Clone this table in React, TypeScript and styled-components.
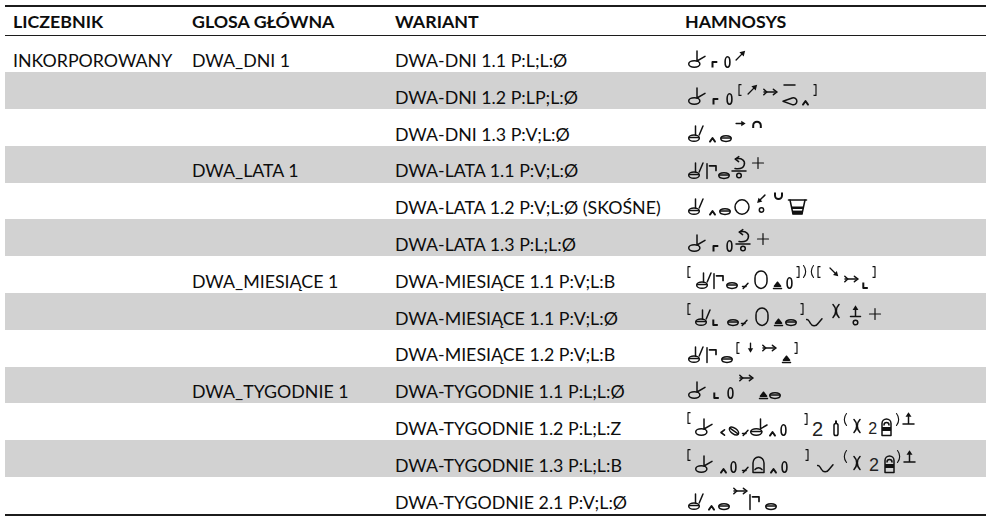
import React from 'react';
import styled, { createGlobalStyle } from 'styled-components';

const GlobalStyle = createGlobalStyle`
  html, body {
    margin: 0;
    padding: 0;
    background: #fff;
  }
  body {
    font-family: Lato, 'Noto Sans', sans-serif;
    color: #0d0d0d;
  }
`;

const Table = styled.div`
  margin: 5px 0 0 5px;
  width: 981px;
  border-top: 2px solid #1c1c1c;
  border-bottom: 2px solid #1c1c1c;
`;

const Row = styled.div<{ $shade?: boolean; $head?: boolean }>`
  display: grid;
  grid-template-columns: 179px 203px 290px 1fr;
  align-items: end;
  box-sizing: border-box;
  height: ${(p) => (p.$head ? '28.5px' : '36.8px')};
  padding-left: 8px;
  background: ${(p) => (p.$shade ? '#d2d2d2' : 'transparent')};
  border-bottom: ${(p) => (p.$head ? '1.5px solid #1c1c1c' : 'none')};
`;

const Cell = styled.div<{ $head?: boolean }>`
  font-size: 17.8px;
  line-height: 1.2;
  font-weight: ${(p) => (p.$head ? 700 : 400)};
  padding-bottom: ${(p) => (p.$head ? '2px' : '1px')};
  white-space: nowrap;
`;

const Notation = styled.div`
  display: flex;
  align-items: flex-end;
  padding-bottom: 4px;
`;

const Sym = styled.svg<{ $lift?: number; $ml?: number }>`
  display: block;
  flex: none;
  overflow: visible;
  margin-left: ${(p) => p.$ml ?? 2}px;
  margin-bottom: ${(p) => p.$lift ?? 0}px;
  fill: none;
  stroke: #111;
  stroke-width: 1.5;
  stroke-linecap: round;
  stroke-linejoin: round;
`;

const Num = styled.span<{ $size: number; $lift?: number; $ml?: number }>`
  display: block;
  flex: none;
  font-family: 'Liberation Sans', Arial, sans-serif;
  font-size: ${(p) => p.$size}px;
  line-height: 1;
  font-weight: 400;
  color: #222;
  margin-left: ${(p) => p.$ml ?? 2}px;
  margin-bottom: ${(p) => (p.$lift ?? 0) - p.$size * 0.155}px;
`;

type GP = { lift?: number; ml?: number };

const make = (w: number, h: number, body: React.ReactNode) => {
  const Glyph = ({ lift, ml }: GP) => (
    <Sym width={w} height={h} viewBox={`0 0 ${w} ${h}`} $lift={lift} $ml={ml}>
      {body}
    </Sym>
  );
  return Glyph;
};

const INK = '#111';

// hand shapes
const HandFlat = make(
  18,
  18,
  <>
    <ellipse cx="6.3" cy="14" rx="5.6" ry="3.2" />
    <path d="M9 1 V11 L17 6.4" />
  </>
);

const HandTwo = make(
  16,
  17,
  <>
    <ellipse cx="6" cy="13.2" rx="5.3" ry="3.1" />
    <path d="M1.2 12.6 H10.8" />
    <path d="M7.5 1 V10" />
    <path d="M15 1 L11.2 10" />
  </>
);

const HandOval = make(
  18,
  18,
  <>
    <ellipse cx="6.3" cy="14" rx="5.6" ry="3.2" />
    <path d="M1 13.4 H11.6" />
    <path d="M10.5 1 V10.8 L17 7" />
  </>
);

// small modifiers
const DirR = make(7, 8, <path d="M1.5 7.5 V2 H6.3" strokeWidth={2} strokeLinecap="butt" />);
const DirL = make(6, 7, <path d="M1.3 0.5 V6 H5.8" strokeWidth={2} strokeLinecap="butt" />);
const DirBar = make(
  11,
  16,
  <>
    <path d="M1 0.8 V15.5" />
    <path d="M3.5 2.8 H10 V7.5" strokeWidth={1.7} />
  </>
);
const Caret = make(7, 5, <path d="M1 4.6 L3.5 1 L6 4.6" strokeWidth={1.9} />);
const OvalLine = make(
  12,
  7,
  <>
    <ellipse cx="6" cy="3.6" rx="5.2" ry="2.8" />
    <path d="M1.2 2.9 H10.8" />
  </>
);
const Zero = make(7, 12, <ellipse cx="3.5" cy="6" rx="2.4" ry="5.2" strokeWidth={1.6} />);

// movement arrows: a straight arrow turned to the given angle
const Arrow = ({ angle, size = 11, lift, ml }: GP & { angle: number; size?: number }) => (
  <Sym width={size} height={size} viewBox="0 0 12 12" $lift={lift} $ml={ml}>
    <g transform={`rotate(${angle} 6 6)`}>
      <path d={angle % 90 === 0 ? 'M1.2 6 H8' : 'M-0.8 6 H8.5'} strokeWidth={1.5} />
      <polygon
        points={angle % 90 === 0 ? '11.6,6 6.8,3.1 6.8,8.9' : '13.2,6 7.6,2.7 7.6,9.3'}
        fill={INK}
        stroke="none"
      />
    </g>
  </Sym>
);

const TailArrow = make(
  15,
  8,
  <>
    <path d="M1 4 H13.5" />
    <path d="M10.4 1.3 L14 4 L10.4 6.7" />
    <path d="M0.8 1.2 L3.8 4 L0.8 6.8" />
  </>
);

const BarDrop = make(
  15,
  21,
  <>
    <path d="M2 1 H13" />
    <path d="M1 17.3 L10.2 14 A3.5 3.5 0 1 1 10.2 20.6 Z" />
  </>
);

const Arc = make(10, 7, <path d="M1.2 7 V4.5 A3.8 3.8 0 0 1 8.8 4.5 V7" strokeWidth={2} strokeLinecap="butt" />);

const Plus = make(12, 12, <path d="M6 0.5 V11.5 M0.5 6 H11.5" strokeWidth={1.2} />);

const RotDot = make(
  16,
  22,
  <>
    <path d="M4.5 2 C11 0.5 14.5 4 13.2 8 C12.2 11 8.5 12.3 4 11.6" />
    <path d="M7.8 -0.4 L4.3 2.1 L7.6 4.6" />
    <path d="M1 14 H15" />
    <circle cx="8" cy="18.5" r="2.3" />
  </>
);

// locations
const BigO = make(16, 16, <ellipse cx="8" cy="8" rx="7" ry="7.2" />);
const Tomb = make(14, 19, <rect x="1" y="1" width="12" height="17.4" rx="6" ry="7" />);

const ArrowDLCircle = make(
  10,
  19,
  <>
    <g transform="rotate(135 5 5)">
      <path d="M-0.5 5 H6.5" strokeWidth={1.5} />
      <polygon points="10.5,5 5.8,2.3 5.8,7.7" fill={INK} stroke="none" />
    </g>
    <circle cx="5.5" cy="16" r="2.2" />
  </>
);

const Cup = make(9, 8, <path d="M1 0.5 V3.5 A3.5 3.5 0 0 0 8 3.5 V0.5" strokeWidth={2} strokeLinecap="butt" />);

const Chest = make(
  19,
  16,
  <>
    <path d="M0.5 1 H18.5" strokeWidth={1.6} />
    <path d="M2 1 L5 15 H14 L17 1" />
    <rect x="3.6" y="7.5" width="11.8" height="2.5" fill={INK} stroke="none" />
    <rect x="4.5" y="11.6" width="10" height="3.6" fill={INK} stroke="none" />
  </>
);

const TriUnder = make(
  9,
  8,
  <>
    <polygon points="1.4,5.2 4.5,1.2 7.6,5.2" fill={INK} />
    <path d="M0.5 7.4 H8.5" />
  </>
);

const Slash = make(
  7,
  7,
  <>
    <path d="M1.2 6.5 L6 1.2" />
    <path d="M0.5 4.6 H4" />
  </>
);

const Wave = make(17, 9, <path d="M0.7 1.5 C2.5 1 3 3 4.2 5 C6 8.5 10 8.5 12 5.5 L16 0.8" strokeWidth={1.5} />);

const Twin = make(8, 14, <path d="M1 0.5 C4.6 4 4.6 10 1 13.5 M7 0.5 C3.4 4 3.4 10 7 13.5" strokeWidth={1.6} />);

const UpCircle = make(
  11,
  22,
  <>
    <polygon points="5.5,0.3 2.6,5 8.4,5" fill={INK} stroke="none" />
    <path d="M5.5 5 V11.5 M0.5 11.5 H10.5" />
    <circle cx="5.5" cy="17.5" r="2.3" />
  </>
);

const UpBar = make(
  13,
  13,
  <>
    <polygon points="6.5,0.3 3.5,4.8 9.5,4.8" fill={INK} stroke="none" />
    <path d="M6.5 4.8 V12 M1 12 H12" />
  </>
);

const Tube = make(
  6,
  16,
  <>
    <rect x="1" y="3.5" width="4" height="12" rx="1.8" />
    <rect x="2" y="0.5" width="2" height="2.6" fill={INK} stroke="none" />
  </>
);

const TubeFilled = make(
  11,
  18,
  <>
    <path d="M1 17.5 V5.5 A4.5 4.5 0 0 1 10 5.5 V17.5 Z" />
    <path d="M3 7 A2.5 2.5 0 0 1 8 7" />
    <rect x="1" y="9" width="9" height="4" fill={INK} stroke="none" />
  </>
);

const TiltOval = make(
  12,
  10,
  <g transform="rotate(35 6 5)">
    <ellipse cx="6" cy="5" rx="5.3" ry="2.8" />
    <path d="M1 5 H11" />
  </g>
);

const Less = make(5, 7, <path d="M4.5 0.8 L1 3.5 L4.5 6.2" strokeWidth={1.6} />);

const HeadLoop = make(
  13,
  17,
  <>
    <path d="M1 16.5 V7 A5.5 6 0 0 1 12 7 V16.5 Z" />
    <path d="M3 13.6 C5 11.2 8 11.2 10 13.6" />
  </>
);

// brackets
const BracketL = make(4, 12, <path d="M3.5 0.6 H1 V11.4 H3.5" strokeWidth={1.15} strokeLinecap="butt" />);
const BracketR = make(4, 12, <path d="M0.5 0.6 H3 V11.4 H0.5" strokeWidth={1.15} strokeLinecap="butt" />);
const ParenL = make(4, 13, <path d="M3.5 0.5 C0.6 4 0.6 9 3.5 12.5" strokeWidth={1.15} />);
const ParenR = make(4, 13, <path d="M0.5 0.5 C3.4 4 3.4 9 0.5 12.5" strokeWidth={1.15} />);

const rows: { liczebnik?: string; glosa?: string; wariant: string; ham: React.ReactNode }[] = [
  {
    liczebnik: 'INKORPOROWANY',
    glosa: 'DWA_DNI 1',
    wariant: 'DWA-DNI 1.1 P:L;L:Ø',
    ham: (
      <>
        <HandFlat ml={3} />
        <DirR ml={5} />
        <Zero ml={6} />
        <Arrow angle={-45} ml={4} lift={7} />
      </>
    ),
  },
  {
    wariant: 'DWA-DNI 1.2 P:LP;L:Ø',
    ham: (
      <>
        <HandFlat ml={3} />
        <DirR ml={6} />
        <Zero ml={7} />
        <BracketL ml={5} lift={9} />
        <Arrow angle={-45} ml={5} lift={10} />
        <TailArrow ml={5} lift={9} />
        <BarDrop ml={4} />
        <Caret ml={5} />
        <BracketR ml={4} lift={9} />
      </>
    ),
  },
  {
    wariant: 'DWA-DNI 1.3 P:V;L:Ø',
    ham: (
      <>
        <HandTwo ml={3} />
        <Caret ml={5} />
        <OvalLine ml={4} />
        <Arrow angle={0} ml={3} lift={13} />
        <Arc ml={6} lift={14} />
      </>
    ),
  },
  {
    glosa: 'DWA_LATA 1',
    wariant: 'DWA-LATA 1.1 P:V;L:Ø',
    ham: (
      <>
        <HandTwo ml={3} />
        <DirBar ml={2} />
        <OvalLine ml={1} />
        <RotDot ml={1} />
        <Plus ml={5} lift={10} />
      </>
    ),
  },
  {
    wariant: 'DWA-LATA 1.2 P:V;L:Ø (SKOŚNE)',
    ham: (
      <>
        <HandTwo ml={3} />
        <Caret ml={5} />
        <OvalLine ml={3} />
        <BigO ml={3} />
        <ArrowDLCircle ml={6} lift={2} />
        <Cup ml={8} lift={15} />
        <Chest ml={5} />
      </>
    ),
  },
  {
    wariant: 'DWA-LATA 1.3 P:L;L:Ø',
    ham: (
      <>
        <HandFlat ml={3} />
        <DirR ml={6} />
        <Zero ml={7} />
        <RotDot ml={2} />
        <Plus ml={6} lift={7} />
      </>
    ),
  },
  {
    glosa: 'DWA_MIESIĄCE 1',
    wariant: 'DWA-MIESIĄCE 1.1 P:V;L:B',
    ham: (
      <>
        <BracketL ml={2} lift={11} />
        <HandTwo ml={5} />
        <DirBar ml={1} />
        <OvalLine ml={2} />
        <Slash ml={4} />
        <Tomb ml={5} />
        <TriUnder ml={5} />
        <Zero ml={4} />
        <BracketR ml={3} lift={11} />
        <ParenR ml={3} lift={11} />
        <ParenL ml={3} lift={11} />
        <BracketL ml={3} lift={11} />
        <Arrow angle={45} size={10} ml={8} lift={12} />
        <TailArrow ml={5} lift={6} />
        <DirL ml={3} />
        <BracketR ml={4} lift={11} />
      </>
    ),
  },
  {
    wariant: 'DWA-MIESIĄCE 1.1 P:V;L:Ø',
    ham: (
      <>
        <BracketL ml={2} lift={11} />
        <HandTwo ml={4} />
        <DirL ml={1} />
        <OvalLine ml={9} />
        <Slash ml={2} />
        <Tomb ml={7} />
        <TriUnder ml={5} />
        <OvalLine ml={2} />
        <BracketR ml={3} lift={11} />
        <Wave ml={2} lift={-1} />
        <Twin ml={9} lift={8} />
        <UpCircle ml={10} lift={-1} />
        <Plus ml={8} lift={6} />
      </>
    ),
  },
  {
    wariant: 'DWA-MIESIĄCE 1.2 P:V;L:B',
    ham: (
      <>
        <HandTwo ml={3} />
        <DirBar ml={2} />
        <OvalLine ml={4} />
        <BracketL ml={3} lift={9} />
        <Arrow angle={90} size={11} ml={5} lift={10} />
        <TailArrow ml={6} lift={11} />
        <TriUnder ml={5} />
        <BracketR ml={3} lift={9} />
      </>
    ),
  },
  {
    glosa: 'DWA_TYGODNIE 1',
    wariant: 'DWA-TYGODNIE 1.1 P:L;L:Ø',
    ham: (
      <>
        <HandFlat ml={3} />
        <DirL ml={7} />
        <Zero ml={8} />
        <TailArrow ml={5} lift={17} />
        <TriUnder ml={5} />
        <OvalLine ml={1} />
      </>
    ),
  },
  {
    wariant: 'DWA-TYGODNIE 1.2 P:L;L:Z',
    ham: (
      <>
        <BracketL ml={2} lift={12} />
        <HandFlat ml={4} />
        <Less ml={7} />
        <TiltOval ml={3} />
        <Slash ml={2} />
        <HandOval ml={1} />
        <Caret ml={1} />
        <Zero ml={4} />
        <BracketR ml={17} lift={11} />
        <Num $size={20} $ml={4}>2</Num>
        <Tube ml={10} />
        <ParenL ml={4} lift={10} />
        <Twin ml={6} lift={3} />
        <Num $size={16} $ml={7} $lift={2}>2</Num>
        <TubeFilled ml={4} />
        <ParenR ml={4} lift={10} />
        <UpBar ml={2} lift={11} />
      </>
    ),
  },
  {
    wariant: 'DWA-TYGODNIE 1.3 P:L;L:B',
    ham: (
      <>
        <BracketL ml={2} lift={12} />
        <HandFlat ml={4} />
        <Caret ml={7} />
        <Zero ml={3} />
        <Slash ml={5} />
        <HeadLoop ml={3} />
        <Caret ml={5} />
        <Zero ml={4} />
        <BracketR ml={17} lift={12} />
        <Wave ml={8} />
        <ParenL ml={9} lift={10} />
        <Twin ml={6} lift={3} />
        <Num $size={18} $ml={8} $lift={2}>2</Num>
        <TubeFilled ml={5} />
        <ParenR ml={2} lift={10} />
        <UpBar ml={2} lift={10} />
      </>
    ),
  },
  {
    wariant: 'DWA-TYGODNIE 2.1 P:V;L:Ø',
    ham: (
      <>
        <HandTwo ml={3} />
        <Caret ml={4} />
        <OvalLine ml={3} />
        <TailArrow ml={3} lift={15} />
        <DirBar ml={1} />
        <OvalLine ml={5} />
      </>
    ),
  },
];

const App: React.FC = () => (
  <>
    <GlobalStyle />
    <Table>
      <Row $head>
        <Cell $head>LICZEBNIK</Cell>
        <Cell $head>GLOSA GŁÓWNA</Cell>
        <Cell $head>WARIANT</Cell>
        <Cell $head>HAMNOSYS</Cell>
      </Row>
      {rows.map((r, i) => (
        <Row key={r.wariant + i} $shade={i % 2 === 1}>
          <Cell>{r.liczebnik ?? ''}</Cell>
          <Cell>{r.glosa ?? ''}</Cell>
          <Cell>{r.wariant}</Cell>
          <Notation>{r.ham}</Notation>
        </Row>
      ))}
    </Table>
  </>
);

export default App;
